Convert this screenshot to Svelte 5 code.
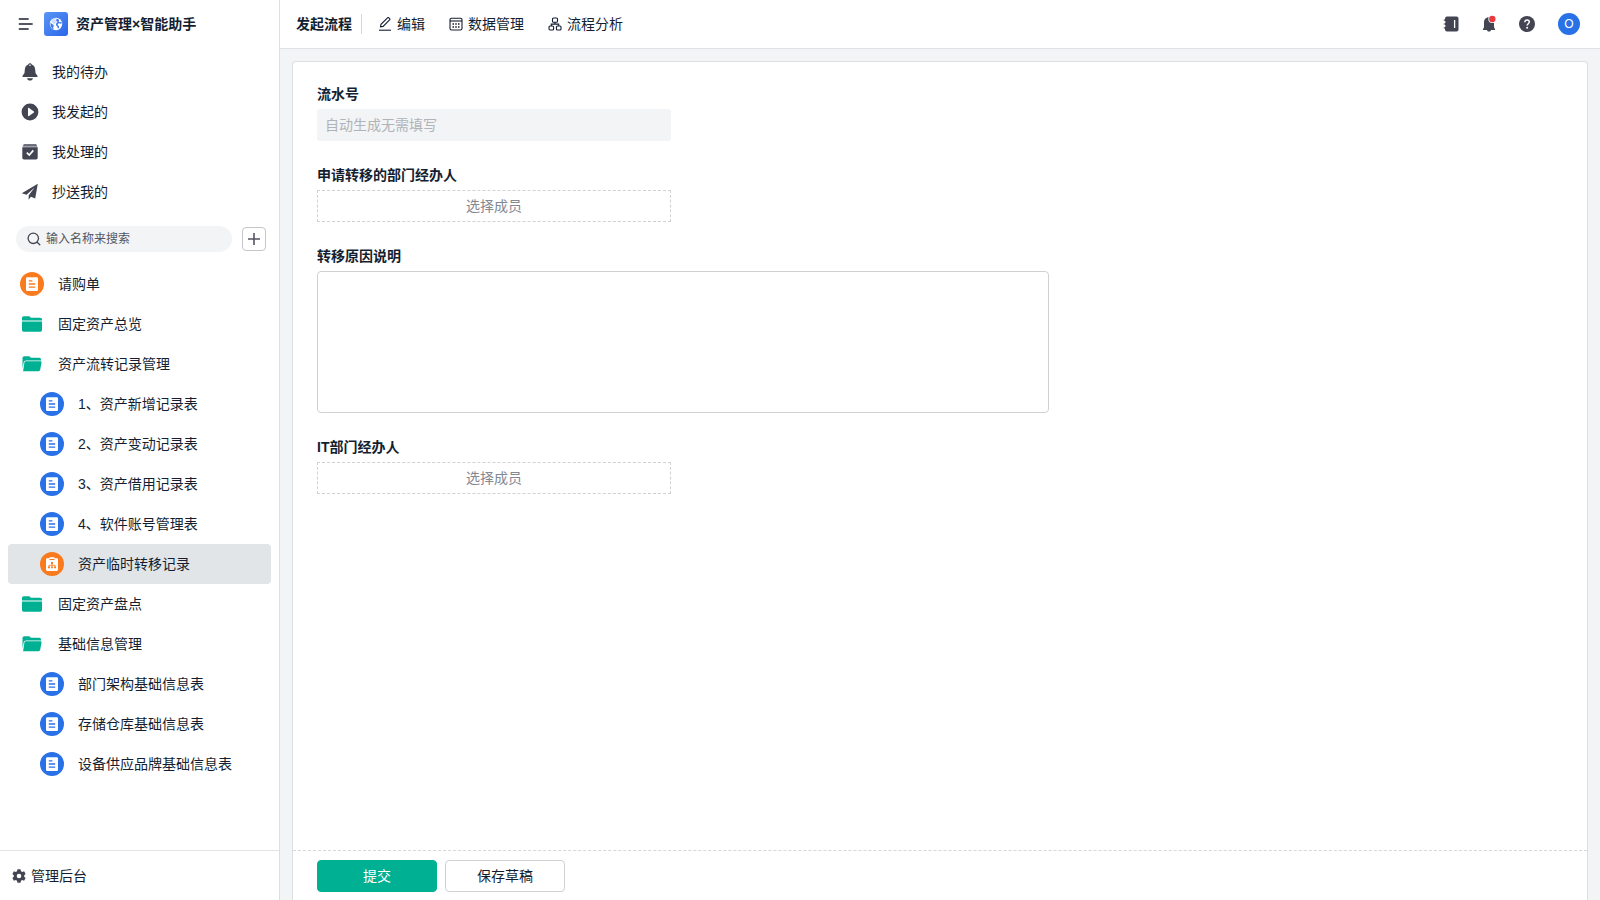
<script>
  let keyword = $state('')
  let reason = $state('')
  let activeId = $state('transfer')

  const menus = [
    { icon: 'bell', name: '我的待办' },
    { icon: 'play', name: '我发起的' },
    { icon: 'done', name: '我处理的' },
    { icon: 'send', name: '抄送我的' }
  ]

  const tree = [
    { id: 'purchase', type: 'form', color: 'orange', name: '请购单' },
    { id: 'overview', type: 'folder', name: '固定资产总览' },
    { id: 'records', type: 'folder-open', name: '资产流转记录管理' },
    { id: 'new', type: 'form', child: true, name: '1、资产新增记录表' },
    { id: 'change', type: 'form', child: true, name: '2、资产变动记录表' },
    { id: 'borrow', type: 'form', child: true, name: '3、资产借用记录表' },
    { id: 'account', type: 'form', child: true, name: '4、软件账号管理表' },
    { id: 'transfer', type: 'flow', color: 'orange', child: true, name: '资产临时转移记录' },
    { id: 'check', type: 'folder', name: '固定资产盘点' },
    { id: 'base', type: 'folder-open', name: '基础信息管理' },
    { id: 'dept', type: 'form', child: true, name: '部门架构基础信息表' },
    { id: 'store', type: 'form', child: true, name: '存储仓库基础信息表' },
    { id: 'brand', type: 'form', child: true, name: '设备供应品牌基础信息表' }
  ]

  const filtered = $derived(tree.filter((item) => item.name.includes(keyword.trim())))
</script>

{#snippet menuIcon(name)}
  <svg width="18" height="18" viewBox="0 0 18 18" fill="currentColor" aria-hidden="true">
    {#if name === 'bell'}
      <path d="M9 .2c.9 0 1.600.6 1.700 1.400 2.200.8 3.300 2.600 3.500 5.100l.3 3.400 1.900 2.600c.4.7.1 1.300-.7 1.300H2.300c-.8 0-1.100-.6-.7-1.300l1.900-2.600.3-3.400c.2-2.500 1.300-4.300 3.500-5.100C7.400.8 8.100.2 9 .2z" />
      <path d="M6 15.200h6c-.3 1.500-1.500 2.300-3 2.300s-2.700-.8-3-2.300z" />
      <circle cx="9" cy="2.200" r=".8" fill="#fff" />
    {:else if name === 'play'}
      <path fill-rule="evenodd" d="M9 .6a8.400 8.400 0 1 1 0 16.800A8.400 8.400 0 0 1 9 .6zM7 5.200v7.600c0 .4.400.6.700.4l5.200-3.800c.3-.2.3-.6 0-.8L7.700 4.800c-.3-.2-.7 0-.7.4z" />
    {:else if name === 'done'}
      <path d="M3.500 1.200h11c.8 0 1.400.6 1.500 1.600H2c.1-1 .7-1.600 1.500-1.600z" />
      <path d="M1.800 2.800h14.400v1.600H1.800z" opacity=".5" />
      <path d="M1.300 4.300h15.400v10.400c0 1-.7 1.700-1.700 1.700H3c-1 0-1.700-.7-1.700-1.700z" />
      <path d="M5.800 9.600l2.500 2.500 4-4.700" fill="none" stroke="#fff" stroke-width="1.700" />
    {:else}
      <path d="M16.800.8L.8 10.300l4.700 1.500 8.200-7.300-6 7.700-.1 4.500 2.300-3 4.300 1.700z" />
    {/if}
  </svg>
{/snippet}

{#snippet nodeIcon(item)}
  {@const color = item.color === 'orange' ? '#fa7a1e' : '#2871e6'}
  {#if item.type === 'folder'}
    <svg class="node-icon" viewBox="0 0 24 24" aria-hidden="true">
      <path d="M2 8.600V6c0-1.100.8-1.800 1.800-1.800h5c.7 0 1.200.3 1.500.8l.4.800h9.500c1 0 1.800.7 1.800 1.700v1.100z" fill="#00b092" />
      <path d="M2 9.400h20v8.700c0 1-.8 1.700-1.700 1.700H3.700c-.9 0-1.700-.7-1.700-1.700z" fill="#00b092" />
    </svg>
  {:else if item.type === 'folder-open'}
    <svg class="node-icon" viewBox="0 0 24 24" aria-hidden="true">
      <path d="M2.500 16.500V6c0-1.100.8-1.800 1.800-1.800h4.500c.7 0 1.200.3 1.500.8l.4.800h8.500c1 0 1.800.7 1.800 1.700v1H6c-1.300 0-2.100.7-2.400 1.900z" fill="#00b092" />
      <path d="M5.800 9.300h14.500c.9 0 1.400.6 1.200 1.500l-1.300 7c-.2.900-.8 1.400-1.600 1.400H3.100l1.300-8.600c.1-.8.6-1.300 1.400-1.300z" fill="#00b092" />
    </svg>
  {:else}
    <svg class="node-icon" viewBox="0 0 24 24" aria-hidden="true">
      <circle cx="12" cy="12" r="12" fill={color} />
      {#if item.type === 'form'}
        <rect x="6" y="5.300" width="12" height="13.700" rx="1.200" fill="#fff" />
        <path d="M8.800 8.800h3.600M8.800 12h6.400M8.800 15.200h6.400" stroke={color} stroke-width="1.300" />
      {:else}
        <path d="M7.200 6.200h2.300V5.200h5v1h2.300c.7 0 1.200.5 1.200 1.200v10.400c0 .7-.5 1.200-1.200 1.200H7.200c-.7 0-1.200-.5-1.200-1.200V7.400c0-.7.5-1.200 1.200-1.200z" fill="#fff" />
        <path d="M9.500 7.500h5" stroke={color} stroke-width="1" />
        <path d="M12 11v2.300M8.900 15v-1.700h6.200V15M12 13.300V15" fill="none" stroke={color} stroke-width=".8" />
        <path d="M11 10h2v2h-2zM8 14.500h1.900v1.800H8zM11.100 14.500h1.800v1.800h-1.800zM14.100 14.500H16v1.800h-1.900z" fill={color} />
      {/if}
    </svg>
  {/if}
{/snippet}

<div class="app">
  <aside class="sidebar">
    <div class="brand">
      <button class="icon-btn" aria-label="收起菜单">
        <svg width="16" height="14" viewBox="0 0 16 14" fill="none" stroke="#545663" stroke-width="1.800" stroke-linecap="round">
          <path d="M1.500 2h8.500M1.500 7h12.500M1.500 12h8.500" />
        </svg>
      </button>
      <svg class="logo" viewBox="0 0 24 24" aria-hidden="true">
        <defs>
          <linearGradient id="logo-bg" x1="0" y1="0" x2="1" y2="1">
            <stop offset="0" stop-color="#5b96f5" />
            <stop offset="1" stop-color="#2a66e8" />
          </linearGradient>
        </defs>
        <rect width="24" height="24" rx="3" fill="url(#logo-bg)" />
        <circle cx="12" cy="12" r="6.200" fill="#fff" />
        <path d="M9.600 6.300l2.500-.4.400 1.200-1.300.5.300 1.100 1.600-.5.900 1.300-1.700 1.300-1.200.2-.4 1.300-1.500-.5-1.500-1.400-.2-1.800z" fill="#3f7cf0" opacity=".25" />
        <path d="M12.600 6.900l1.500.2 1.100 1.200-.6 1.200.9.700 2-.1.300 1.100-1.300.5-1.500-.5-1.300.8.2 1.500 1.200.5-.2 1.900-1 .9-.6-2.200-1.400-1.500.2-1.600 1.300-1.300-.2-1.100-1.400-.5z" fill="#3f7cf0" />
        <path d="M6.400 10.500l1.600 1.400 1.500.9.300 1.300-.7 1.200.7 2-1.700-.9-1.400-2.100z" fill="#3f7cf0" />
      </svg>
      <h1>资产管理×智能助手</h1>
    </div>

    <nav class="menus">
      {#each menus as menu}
        <a class="menu" href="#{menu.icon}">
          {@render menuIcon(menu.icon)}
          <span>{menu.name}</span>
        </a>
      {/each}
    </nav>

    <div class="search-row">
      <label class="search">
        <svg width="14" height="14" viewBox="0 0 14 14" fill="none" stroke="#434553" stroke-width="1.300" stroke-linecap="round" aria-hidden="true">
          <circle cx="6.300" cy="6.300" r="5.200" />
          <path d="M10.200 10.200l2.600 2.600" />
        </svg>
        <input type="text" bind:value={keyword} placeholder="输入名称来搜索" aria-label="搜索" />
      </label>
      <button class="add" aria-label="新建">
        <svg width="14" height="14" viewBox="0 0 14 14" stroke="#545663" stroke-width="1.600" aria-hidden="true">
          <path d="M7 1v12M1 7h12" />
        </svg>
      </button>
    </div>

    <nav class="tree">
      {#each filtered as item (item.id)}
        <a
          class="node"
          class:child={item.child}
          class:active={activeId === item.id}
          href="#{item.id}"
          onclick={() => (activeId = item.id)}
        >
          {@render nodeIcon(item)}
          <span>{item.name}</span>
        </a>
      {/each}
    </nav>

    <a class="admin" href="#admin">
      <svg width="14" height="14" viewBox="0 0 14 14" fill="#434553" aria-hidden="true">
        <path fill-rule="evenodd" d="M5.500.3h3l.5 1.900 1.200.7 1.900-.6 1.500 2.600L12.200 6.300v1.400l1.400 1.400-1.500 2.600-1.900-.6-1.200.7-.5 1.900h-3L5 11.800l-1.200-.7-1.900.6L.4 9.100l1.400-1.400V6.300L.4 4.900l1.500-2.600 1.900.6L5 2.200zM7 4.700a2.300 2.300 0 1 0 0 4.600 2.300 2.300 0 0 0 0-4.600z" />
      </svg>
      <span>管理后台</span>
    </a>
  </aside>

  <div class="main">
    <header class="topbar">
      <nav class="tabs">
        <a class="tab current" href="#start">发起流程</a>
        <a class="tab" href="#edit">
          <svg width="14" height="14" viewBox="0 0 14 14" fill="none" stroke="currentColor" stroke-width="1.100" aria-hidden="true">
            <path d="M2.500 9.900l.5-2.600 6.500-6.500c.4-.4.900-.4 1.300 0l.8.800c.4.400.4.900 0 1.300L5.100 9.400z" />
            <path d="M1 13.200h12" />
          </svg>
          编辑
        </a>
        <a class="tab" href="#data">
          <svg width="14" height="14" viewBox="0 0 14 14" fill="none" stroke="currentColor" stroke-width="1.100" aria-hidden="true">
            <rect x="1" y="1.200" width="12" height="11.800" rx="1.600" />
            <path d="M1 4h12" />
            <path d="M3.500 7h7M3.500 10h7" stroke-width="1.500" stroke-dasharray="1.500 1.250" />
          </svg>
          数据管理
        </a>
        <a class="tab" href="#analysis">
          <svg width="14" height="14" viewBox="0 0 14 14" fill="none" stroke="currentColor" stroke-width="1.100" aria-hidden="true">
            <rect x="4.500" y="1" width="5" height="4.200" rx="1" />
            <rect x="1" y="9" width="4.600" height="4" rx="1" />
            <rect x="8.400" y="9" width="4.600" height="4" rx="1" />
            <path d="M7 5.200v1.900M3.300 9V7.100h7.400V9" />
          </svg>
          流程分析
        </a>
      </nav>
      <div class="tools">
        <button class="icon-btn" aria-label="通讯录">
          <svg width="16" height="16" viewBox="0 0 16 16" aria-hidden="true">
            <rect x="2" y=".5" width="13.500" height="15" rx="2" fill="#434553" />
            <path d="M.8 4.200h2M.8 8h2M.8 11.800h2" stroke="#434553" stroke-width="1.200" />
            <path d="M2 6.100h1M2 9.900h1" stroke="#fff" stroke-width=".7" />
            <path d="M11.600 4v8" stroke="#fff" stroke-width="1.300" />
          </svg>
        </button>
        <button class="icon-btn" aria-label="消息">
          <svg width="16" height="18" viewBox="0 0 16 18" aria-hidden="true">
            <path d="M8 2.200c3.400 0 5 2.400 5 5.200v4.500l1.300 3.100H10c-.2 1-1 1.600-2 1.600S6.200 16 6 15H1.700L3 11.900V7.400c0-2.800 1.600-5.200 5-5.200z" fill="#434553" />
            <circle cx="11.300" cy="4" r="4" fill="#fff" />
            <circle cx="11.300" cy="4" r="3.200" fill="#e83a3f" />
          </svg>
        </button>
        <button class="icon-btn" aria-label="帮助">
          <svg width="16" height="16" viewBox="0 0 16 16" aria-hidden="true">
            <circle cx="8" cy="8" r="8" fill="#434553" />
            <path d="M5.800 6.300c0-1.300 1-2.200 2.300-2.200s2.200.8 2.200 2c0 1.600-2.200 1.700-2.200 3.500" fill="none" stroke="#fff" stroke-width="1.500" />
            <circle cx="8.100" cy="11.800" r="1" fill="#fff" />
          </svg>
        </button>
        <button class="avatar">O</button>
      </div>
    </header>

    <form class="card" onsubmit={(e) => e.preventDefault()}>
      <div class="fields">
        <div class="field">
          <label for="serial">流水号</label>
          <input id="serial" class="readonly" type="text" placeholder="自动生成无需填写" disabled />
        </div>
        <div class="field">
          <label for="dept-member">申请转移的部门经办人</label>
          <button id="dept-member" class="picker" type="button">选择成员</button>
        </div>
        <div class="field wide">
          <label for="reason">转移原因说明</label>
          <textarea id="reason" bind:value={reason}></textarea>
        </div>
        <div class="field">
          <label for="it-member">IT部门经办人</label>
          <button id="it-member" class="picker" type="button">选择成员</button>
        </div>
      </div>
      <footer class="actions">
        <button class="btn primary" type="submit">提交</button>
        <button class="btn" type="button">保存草稿</button>
      </footer>
    </form>
  </div>
</div>

<style>
  :global(body) {
    background: #f2f4f6;
  }

  .app {
    display: flex;
    height: 100vh;
    color: #141e31;
    font-family: 'Liberation Sans', 'Noto Sans CJK SC', sans-serif;
    font-size: 14px;
    line-height: 20px;
  }

  .app * {
    box-sizing: border-box;
  }

  a {
    color: inherit;
    text-decoration: none;
  }

  button,
  input,
  textarea {
    font: inherit;
    color: inherit;
    margin: 0;
  }

  button {
    padding: 0;
    cursor: pointer;
  }

  svg {
    display: block;
    flex-shrink: 0;
  }

  .icon-btn {
    border: none;
    background: none;
  }

  .sidebar {
    display: flex;
    flex-direction: column;
    flex-shrink: 0;
    width: 280px;
    background: #fff;
    border-right: 1px solid #dcdfe2;
  }

  .brand {
    display: flex;
    align-items: center;
    height: 48px;
    padding-left: 18px;
    margin-bottom: 4px;
  }

  .logo {
    width: 24px;
    height: 24px;
    margin: 0 8px 0 10px;
  }

  h1 {
    margin: 0;
    font-size: 14px;
    font-weight: 600;
  }

  .menu {
    display: flex;
    align-items: center;
    gap: 13px;
    height: 40px;
    padding-left: 21px;
  }

  .menu svg {
    color: #434553;
  }

  .search-row {
    display: flex;
    align-items: center;
    gap: 10px;
    padding: 14px 13px 12px 16px;
  }

  .search {
    display: flex;
    flex: 1;
    align-items: center;
    gap: 5px;
    height: 26px;
    padding: 0 11px;
    border-radius: 13px;
    background: #f2f4f5;
  }

  .search input {
    flex: 1;
    min-width: 0;
    padding: 0;
    border: none;
    outline: none;
    background: none;
    font-size: 12px;
  }

  .search input::placeholder {
    color: #545663;
    opacity: 1;
  }

  .add {
    display: flex;
    align-items: center;
    justify-content: center;
    width: 24px;
    height: 24px;
    border: 1px solid #c4c6ca;
    border-radius: 4px;
    background: #fff;
  }

  .tree {
    flex: 1;
    min-height: 0;
    padding: 0 8px;
    overflow: auto;
  }

  .node {
    display: flex;
    align-items: center;
    gap: 14px;
    height: 40px;
    padding-left: 12px;
    border-radius: 4px;
  }

  .node.child {
    padding-left: 32px;
  }

  .node.active {
    background: #e1e5e8;
  }

  .node-icon {
    width: 24px;
    height: 24px;
  }

  .admin {
    display: flex;
    align-items: center;
    gap: 5px;
    height: 50px;
    padding-left: 12px;
    border-top: 1px solid #e2e4e6;
  }

  .main {
    display: flex;
    flex: 1;
    flex-direction: column;
    min-width: 0;
  }

  .topbar {
    display: flex;
    align-items: center;
    justify-content: space-between;
    height: 49px;
    padding: 0 20px 0 16px;
    background: #fff;
    border-bottom: 1px solid #dfe2e5;
  }

  .tabs,
  .tools {
    display: flex;
    align-items: center;
  }

  .tabs {
    gap: 24px;
  }

  .tab {
    display: flex;
    align-items: center;
    gap: 5px;
  }

  .tab.current {
    padding-right: 9px;
    margin-right: -8px;
    border-right: 1px solid #d5d7da;
    font-weight: 600;
  }

  .tools {
    gap: 22px;
  }

  .avatar {
    width: 22px;
    height: 22px;
    margin-left: 1px;
    border: none;
    border-radius: 50%;
    background: #2871e6;
    color: #fff;
    font-size: 12px;
  }

  .card {
    display: flex;
    flex: 1;
    flex-direction: column;
    min-height: 0;
    margin: 12px 12px 0;
    border: 1px solid #dcdfe2;
    border-bottom: none;
    border-radius: 4px 4px 0 0;
    background: #fff;
  }

  .fields {
    display: grid;
    flex: 1;
    grid-template-columns: repeat(3, 1fr);
    grid-auto-rows: max-content;
    gap: 24px;
    max-width: 1158px;
    padding: 22px 24px;
    overflow: auto;
  }

  .field {
    display: flex;
    flex-direction: column;
    grid-column: 1 / span 1;
    gap: 5px;
  }

  .field.wide {
    grid-column: 1 / span 2;
  }

  .field label {
    font-weight: 600;
  }

  .readonly {
    height: 32px;
    padding: 0 8px;
    border: none;
    border-radius: 3px;
    background: #f2f4f5;
  }

  .readonly::placeholder {
    color: #b0b3b8;
    opacity: 1;
  }

  .picker {
    height: 32px;
    border: 1px dashed #cfd1d3;
    background: none;
    color: #838892;
  }

  textarea {
    height: 142px;
    padding: 8px;
    border: 1px solid #cfd1d3;
    border-radius: 4px;
    outline: none;
    resize: none;
  }

  .actions {
    display: flex;
    align-items: center;
    gap: 8px;
    height: 50px;
    padding: 0 24px;
    border-top: 1px dashed #d5d7da;
  }

  .btn {
    width: 120px;
    height: 32px;
    border: 1px solid #cfd1d3;
    border-radius: 4px;
    background: #fff;
  }

  .btn.primary {
    border-color: #00b092;
    background: #00b092;
    color: #fff;
  }
</style>
